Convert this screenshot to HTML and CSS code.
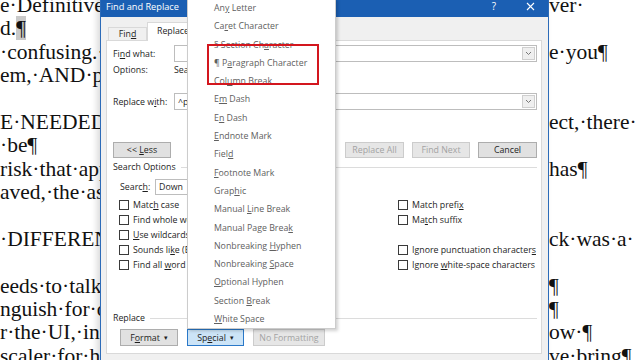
FILE: index.html
```html
<!DOCTYPE html>
<html lang="en">

<head>
    <meta charset="UTF-8">
    <title>Find and Replace</title>
    <link rel="stylesheet" href="styles.css">
</head>

<body>
    <div class="doc">
        <div class="doc-line"><span>e·Definitive·</span><span class="tail">ver·</span></div>
        <div class="doc-line"><span>d.<span class="sel">¶</span></span><span class="tail"></span></div>
        <div class="doc-line"><span>·confusing.·</span><span class="tail">e·you¶</span></div>
        <div class="doc-line"><span>em,·AND·pu</span><span class="tail"></span></div>
        <div class="doc-line"><span></span><span class="tail"></span></div>
        <div class="doc-line"><span>E·NEEDED"</span><span class="tail">ect,·there·</span></div>
        <div class="doc-line"><span>·be¶</span><span class="tail"></span></div>
        <div class="doc-line"><span>risk·that·app</span><span class="tail">has¶</span></div>
        <div class="doc-line"><span>aved,·the·ast</span><span class="tail"></span></div>
        <div class="doc-line"><span></span><span class="tail"></span></div>
        <div class="doc-line"><span>·DIFFEREN</span><span class="tail">ck·was·a·</span></div>
        <div class="doc-line"><span></span><span class="tail"></span></div>
        <div class="doc-line"><span>eeds·to·talk·t</span><span class="tail">¶</span></div>
        <div class="doc-line"><span>nguish·for·o</span><span class="tail">¶</span></div>
        <div class="doc-line"><span>r·the·UI,·inc</span><span class="tail">ow·¶</span></div>
        <div class="doc-line"><span>scaler·for·ho</span><span class="tail">ve·bring¶</span></div>
    </div>

    <div class="dialog">
        <div class="titlebar">
            <span class="title">Find and Replace</span>
            <span class="title-btn">?</span>
            <span class="title-btn">
                <svg width="9" height="9" viewBox="0 0 9 9"><path d="M1 1L8 8M8 1L1 8" stroke="#fff" stroke-width="1.1"/></svg>
            </span>
        </div>
        <div class="tabs">
            <div class="tab"><span>Fin<u>d</u></span></div>
            <div class="tab active"><span>Replace</span></div>
        </div>
        <div class="panel">
            <div class="field-row">
                <span>Fi<u>n</u>d what:</span>
                <div class="combo">
                    <span class="combo-text"></span>
                    <span class="combo-arrow"><svg width="7" height="5" viewBox="0 0 7 5"><path d="M1 1L3.5 3.5L6 1" fill="none" stroke="#777" stroke-width="1"/></svg></span>
                </div>
            </div>
            <div class="field-row options-row">
                <span>Options:</span>
                <span>Search: Down</span>
            </div>
            <div class="field-row replace-row">
                <span>Replace w<u>i</u>th:</span>
                <div class="combo">
                    <span class="combo-text">^p</span>
                    <span class="combo-arrow"><svg width="7" height="5" viewBox="0 0 7 5"><path d="M1 1L3.5 3.5L6 1" fill="none" stroke="#777" stroke-width="1"/></svg></span>
                </div>
            </div>
            <div class="button-row">
                <div class="btn btn-less"><span>&lt;&lt; <u>L</u>ess</span></div>
                <div class="button-group">
                    <div class="btn btn-wide disabled"><span>Replace All</span></div>
                    <div class="btn btn-next disabled"><span>Find Next</span></div>
                    <div class="btn btn-wide"><span>Cancel</span></div>
                </div>
            </div>
            <div class="group-label"><span>Search Options</span></div>
            <div class="search-row">
                <span class="search-label">Searc<u>h</u>:</span>
                <div class="combo search-combo"><span class="combo-text">Down</span></div>
            </div>
            <div class="checks">
                <div class="check"><span class="box"></span><span>Matc<u>h</u> case</span></div>
                <div class="check"><span class="box"></span><span>Match prefi<u>x</u></span></div>
                <div class="check"><span class="box"></span><span>Find whole words only</span></div>
                <div class="check"><span class="box"></span><span>Ma<u>t</u>ch suffix</span></div>
                <div class="check"><span class="box"></span><span><u>U</u>se wildcards</span></div>
                <div></div>
                <div class="check"><span class="box"></span><span>Sounds li<u>k</u>e (English)</span></div>
                <div class="check"><span class="box"></span><span>Ignore punctuation character<u>s</u></span></div>
                <div class="check"><span class="box"></span><span>Find all <u>w</u>ord forms (English)</span></div>
                <div class="check"><span class="box"></span><span>Ignore <u>w</u>hite-space characters</span></div>
            </div>
            <div class="group-label replace-label"><span>Replace</span></div>
            <div class="bottom-row">
                <div class="btn btn-format"><span>F<u>o</u>rmat</span><span class="caret">▾</span></div>
                <div class="btn btn-special"><span>Sp<u>e</u>cial</span><span class="caret">▾</span></div>
                <div class="btn btn-noformat disabled"><span>No Formatting</span></div>
            </div>
        </div>
    </div>

    <div class="menu">
        <div class="menu-item">An<u>y</u> Letter</div>
        <div class="menu-item">Ca<u>r</u>et Character</div>
        <div class="menu-item">§ Section Ch<u>a</u>racter</div>
        <div class="menu-item">¶ P<u>a</u>ragraph Character</div>
        <div class="menu-item">Col<u>u</u>mn Break</div>
        <div class="menu-item">E<u>m</u> Dash</div>
        <div class="menu-item">E<u>n</u> Dash</div>
        <div class="menu-item"><u>E</u>ndnote Mark</div>
        <div class="menu-item">Fiel<u>d</u></div>
        <div class="menu-item"><u>F</u>ootnote Mark</div>
        <div class="menu-item">Grap<u>h</u>ic</div>
        <div class="menu-item">Manual <u>L</u>ine Break</div>
        <div class="menu-item">Manual Page Brea<u>k</u></div>
        <div class="menu-item">Nonbreaking <u>H</u>yphen</div>
        <div class="menu-item">Nonbreaking <u>S</u>pace</div>
        <div class="menu-item"><u>O</u>ptional Hyphen</div>
        <div class="menu-item">Section <u>B</u>reak</div>
        <div class="menu-item"><u>W</u>hite Space</div>
    </div>

    <div class="highlight-box"></div>
</body>

</html>
```

FILE: styles.css
```css
body {
    margin: 0;
    width: 640px;
    height: 360px;
    overflow: hidden;
    position: relative;
    background-color: #fff;
    font-family: "Liberation Serif", "Times New Roman", serif;
}

u {
    text-decoration: underline;
    text-underline-offset: 1px;
}

/* document behind the dialog */
.doc {
    margin-top: -6px;
    font-size: 21.5px;
    color: #111;
}

.doc-line {
    display: grid;
    grid-template-columns: 548px 1fr;
    height: 23.4px;
    line-height: 23.4px;
    white-space: nowrap;
}

.tail {
    margin-left: 1px;
}

.sel {
    background-color: #c9c9c9;
}

/* dialog */
.dialog {
    position: absolute;
    left: 100px;
    top: -6px;
    width: 447px;
    height: 380px;
    background-color: #f0f0f0;
    border: 1px solid #2c6bb8;
    box-shadow: -3px 0 6px rgba(0, 0, 0, 0.15);
    font-family: "Open Sans", "Noto Sans", sans-serif;
    font-size: 8.8px;
    color: #1e1e1e;
    white-space: nowrap;
}

.titlebar {
    height: 22px;
    background-color: #1b5fb3;
    color: #fff;
    display: flex;
    align-items: center;
}

.title {
    padding-left: 5px;
    font-size: 9.2px;
    flex: 1;
}

.title-btn {
    width: 36px;
    height: 22px;
    display: flex;
    align-items: center;
    justify-content: center;
    font-size: 10px;
}

.tabs {
    height: 23px;
    display: flex;
    align-items: flex-end;
    padding-left: 7px;
}

.tab {
    height: 13px;
    width: 39px;
    box-sizing: border-box;
    border: 1px solid #d9d9d9;
    border-bottom: none;
    display: flex;
    align-items: center;
    justify-content: center;
}

.tab.active {
    height: 19px;
    width: 52px;
    background-color: #fff;
    margin-bottom: -1px;
    position: relative;
    padding-bottom: 2px;
}

.panel {
    margin-left: 5px;
    width: 436px;
    box-sizing: border-box;
    background-color: #fff;
    border: 1px solid #d9d9d9;
    padding: 4px 4px 7px 6px;
}

.field-row {
    display: grid;
    grid-template-columns: 61px 1fr;
    align-items: center;
    height: 17px;
}

.options-row {
    height: 14px;
    margin-top: 1px;
}

.replace-row {
    margin-top: 16px;
}

.combo {
    height: 17px;
    box-sizing: border-box;
    border: 1px solid #bdbdbd;
    background-color: #fff;
    display: flex;
    align-items: center;
}

.combo-text {
    padding-left: 3px;
}

.combo-arrow {
    margin-left: auto;
    margin-right: 1px;
    width: 13px;
    height: 13px;
    box-sizing: border-box;
    background-color: #efefef;
    border: 1px solid #cfcfcf;
    display: flex;
    align-items: center;
    justify-content: center;
}

.button-row {
    margin-top: 32px;
    display: flex;
    height: 16px;
}

.button-group {
    margin-left: auto;
    display: flex;
    gap: 8px;
}

.btn {
    height: 16px;
    box-sizing: border-box;
    border: 1px solid #adadad;
    background-color: #e1e1e1;
    display: flex;
    align-items: center;
    justify-content: center;
}

.btn.disabled {
    color: #a3a3a3;
    border-color: #cccccc;
    background-color: #e6e6e6;
}

.btn-less {
    width: 58px;
}

.btn-wide {
    width: 59px;
}

.btn-next {
    width: 58px;
}

.group-label {
    margin-top: 3px;
    height: 12px;
    display: flex;
    align-items: center;
    gap: 5px;
}

.group-label::after {
    content: "";
    flex: 1;
    height: 1px;
    background-color: #dcdcdc;
}

.search-row {
    margin-top: 6px;
    padding-left: 7px;
    height: 16px;
    display: flex;
    align-items: center;
}

.search-label {
    width: 35px;
}

.search-combo {
    width: 100px;
    height: 16px;
}

.checks {
    margin-top: 2px;
    padding-left: 6px;
    display: grid;
    grid-template-columns: 279px 1fr;
    grid-auto-rows: 15px;
}

.check {
    display: flex;
    align-items: center;
    gap: 4px;
}

.box {
    width: 10px;
    height: 10px;
    box-sizing: border-box;
    border: 1px solid #3a3a3a;
    background-color: #fff;
}

.replace-label {
    margin-top: 40px;
}

.bottom-row {
    margin-top: 5px;
    padding-left: 7px;
    display: flex;
    gap: 9px;
}

.bottom-row .btn {
    height: 17px;
}

.btn-format {
    width: 58px;
}

.btn-special {
    width: 57px;
    background-color: #cce4f7;
    border-color: #2a78c8;
}

.btn-noformat {
    width: 72px;
}

.caret {
    font-size: 7px;
    margin-left: 4px;
}

/* Special drop-down menu */
.menu {
    position: absolute;
    left: 187px;
    top: -2px;
    width: 149px;
    box-sizing: border-box;
    background-color: #fff;
    border: 1px solid #cccccc;
    box-shadow: 2px 2px 3px rgba(0, 0, 0, 0.18);
    font-family: "Open Sans", "Noto Sans", sans-serif;
    font-size: 8.8px;
    color: #606060;
}

.menu-item {
    height: 18.3px;
    line-height: 18.3px;
    padding-left: 26px;
    white-space: nowrap;
}

.highlight-box {
    position: absolute;
    left: 207px;
    top: 44px;
    width: 112px;
    height: 41px;
    box-sizing: border-box;
    border: 2px solid #d3161e;
}
```
